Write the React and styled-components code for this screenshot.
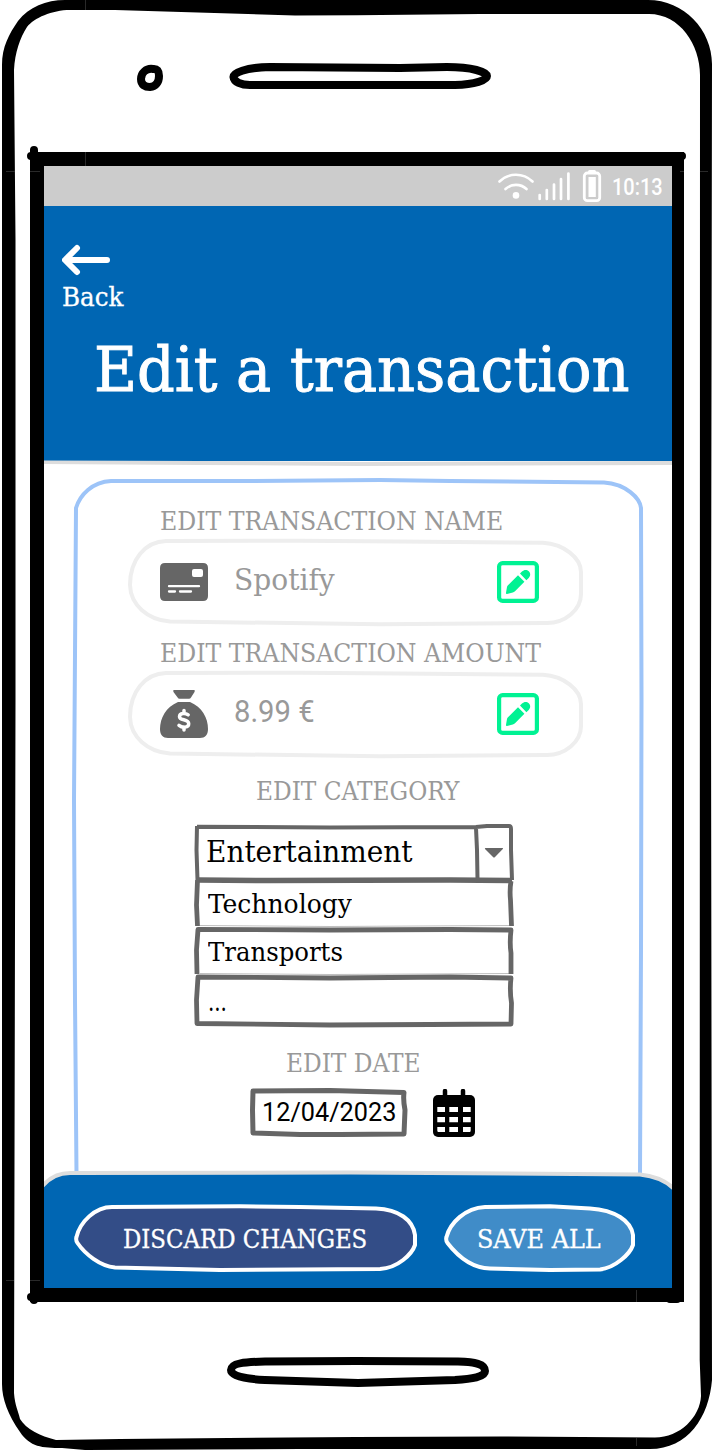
import React, { useLayoutEffect, useRef, useState } from "react";
import styled, { createGlobalStyle } from "styled-components";

const Global = createGlobalStyle`
  body { margin: 0; background: #fff; font-family: "Roboto Slab", "DejaVu Serif Condensed", "DejaVu Serif", serif; }
  button { font: inherit; border: 0; padding: 0; background: none; }
`;

const Device = styled.main`
  position: relative;
  box-sizing: border-box;
  width: 712px;
  height: 1450px;
  padding: 166px 40px 162px 44px;
  overflow: hidden;
  background: #fff;
`;
const Art = styled.svg`
  position: absolute;
  inset: 0;
  width: 100%;
  height: 100%;
  overflow: visible;
  pointer-events: none;
`;
const Screen = styled.div`
  display: flex;
  flex-direction: column;
  width: 628px;
  height: 1122px;
  overflow: hidden;
`;
const StatusBar = styled.div`
  display: flex;
  justify-content: flex-end;
  height: 40px;
  padding-right: 9px;
  background: #ccc;
`;
const Header = styled.header`
  position: relative;
  box-sizing: border-box;
  height: 255px;
  padding: 36px 0 0 18px;
  background: #0066b3;
`;
const BackLink = styled.button`
  display: block;
  text-align: left;
`;
const TitleRow = styled.h1`
  margin: 13px 0 0 32px;
  font-weight: 400;
`;
const Body = styled.section`
  position: relative;
  display: flex;
  flex-direction: column;
  box-sizing: border-box;
  height: 711px;
  padding-top: 42px;
`;
const LabelRow = styled.div`
  height: ${(p) => p.$height || 36}px;
  padding-left: ${(p) => p.$left}px;
`;
const Field = styled.div`
  position: relative;
  display: flex;
  align-items: center;
  box-sizing: border-box;
  width: 455px;
  height: 87px;
  margin: 0 0 9px 84px;
  padding: 0 44px 2px 32px;
`;
const FieldValue = styled.div`
  flex: 1;
  padding: 0 0 4px 26px;
`;
const Select = styled.div`
  position: relative;
  width: 319px;
  margin: 9px 0 0 150px;
`;
const Option = styled.div`
  display: flex;
  align-items: center;
  box-sizing: border-box;
  height: ${(p) => p.$height}px;
  padding-left: ${(p) => p.$left}px;
`;
const DateRow = styled.div`
  display: flex;
  align-items: flex-end;
  padding-left: 206px;
`;
const DateInput = styled.div`
  position: relative;
  box-sizing: border-box;
  width: 157px;
  height: 49px;
  margin-right: 26px;
  padding: 6px 0 0 12px;
`;
const Footer = styled.footer`
  position: relative;
  display: flex;
  gap: 27px;
  box-sizing: border-box;
  height: 116px;
  padding: 32px 0 0 30px;
`;
const PillButton = styled.button`
  position: relative;
  display: flex;
  align-items: center;
  box-sizing: border-box;
  width: ${(p) => p.$width}px;
  height: 68px;
  padding: 2px 0 0 ${(p) => p.$left}px;
  text-align: left;
`;
const TextBox = styled.span`
  position: relative;
  display: block;
  width: ${(p) => p.$width}px;
  height: ${(p) => p.$line}px;
  line-height: ${(p) => p.$line}px;
  font-size: ${(p) => p.$size}px;
  font-weight: ${(p) => p.$weight};
  color: ${(p) => p.$color};
  ${(p) => p.$sans && `font-family: "Roboto Slab", Roboto, sans-serif;`}
  -webkit-text-stroke: ${(p) => p.$heavy}px ${(p) => p.$color};
`;
const TextRun = styled.span`
  display: inline-block;
  white-space: nowrap;
  transform-origin: 0 50%;
`;
const Icon = styled.svg`
  position: relative;
  display: block;
  flex: none;
`;

/* Condenses or widens one line of text so that it fills its box. */
function Text({ w, size = 25.5, line = 36, color = "#999", weight = 400, heavy = 0, sans = false, children }) {
  const ref = useRef(null);
  const [scale, setScale] = useState(1);
  useLayoutEffect(() => {
    setScale(w / ref.current.offsetWidth);
  }, [w, children]);
  return (
    <TextBox $width={w} $size={size} $line={line} $color={color} $weight={weight} $heavy={heavy} $sans={sans}>
      <TextRun ref={ref} style={{ transform: `scaleX(${scale})` }}>{children}</TextRun>
    </TextBox>
  );
}

function DeviceFrame() {
  return (
    <Art viewBox="0 0 712 1450" aria-hidden="true">
      <path
        fillRule="evenodd"
        d="M2 65C2 47 9 34 18 21C29 7 46 0 65 0H648C684 0 712 30 712 64L711 700L712 1380C709 1417 688 1449 650 1449L300 1449L85 1450L62 1448C42 1448 30 1447 20 1432C8 1415 2 1399 2 1384Z
        M14 70C15 52 20 38 27 27C34 18 52 10 70 10H115L295 15.5L356 15.3L480 14H649C680 14 700 45 700 75L699.700 1360L701 1396C700 1417 680 1437.500 655 1437.500L500 1436.500L356 1437L120 1439L56 1440C40 1436 26 1429 20 1419C18 1410 15 1406 14 1393L15.500 700L15.500 240Z"
      />
      <path fillRule="evenodd" d="M30 152H684V1302H30ZM44 166V1288H672V166Z" />
      <path d="M34 150V160M31 156H40M34 1300V1292M31 1297H40M682 156H676M677 1299H670" stroke="#000" strokeWidth="8" strokeLinecap="round" />
      <g fill="none" stroke="#000" strokeWidth="8">
        <path d="M153 69C146 68 141 73 141 79C141 85 145 87 150 87C156 86.500 159 82 159 76C159 71 157 68.500 153 69Z" />
        <path d="M270 67C245 67.5 233 73 233.5 77C234 82 241 85 250 85H455C475 84.5 487 80 487 76C487 72 472 67 447 67L400 68Z" />
        <path d="M265 1361.5L356 1361L458 1361.5C475 1362 485 1364 485 1371C485 1377 472 1379 455 1380L358 1383L265 1380C245 1379 231 1376 231 1370C231 1363 245 1362 265 1361.5Z" />
      </g>
      <path d="M85.5 0V10M85.5 152V166M6 171.5H15M30 171.5H40M680 171.5H684M700 171.5H708M6 1280.5H14M30 1280.5H40M636.5 1290V1302M636.5 1438V1446" stroke="#444" strokeWidth=".6" />
    </Art>
  );
}

function StatusIcons() {
  return (
    <Icon width="115" height="40" viewBox="497 166 115 40" fill="none" stroke="#fff" strokeLinecap="round">
      <path d="M499.5 181.5C509 172.5 523 172.5 532.5 181.5M505.5 189C511.5 183.5 520.5 183.5 526.5 189" strokeWidth="2.6" />
      <circle cx="516" cy="195.4" r="3.3" fill="#fff" stroke="none" />
      <path d="M539.7 195V199M546.8 190V199M554 184.5V199M561 179V199M568.4 173.5V199" strokeWidth="2.7" />
      <rect x="584.3" y="173" width="15.4" height="27.7" rx="3" strokeWidth="2.8" />
      <path d="M589.5 171.5H594.5" strokeWidth="3" />
      <rect x="588.5" y="177" width="7.3" height="20" fill="#fff" stroke="none" />
    </Icon>
  );
}

function PillOutline() {
  return (
    <Art viewBox="128 539 455 87" fill="none" stroke="#eee" strokeWidth="4">
      <path d="M166 541L300 540.7L400 541.5L543 542.8C564 544 581 558 581 572V594C581 610 565 623 547 623L380 624.3L170 621.5C148 620 130.5 605 130 585C130 560 145 541.5 166 541Z" />
    </Art>
  );
}

function CardIcon() {
  return (
    <Icon width="48" height="48" viewBox="160 558 48 48">
      <path fill="#666" fillRule="evenodd" d="M165 563H203Q208 563 208 568V596Q208 601 203 601H165Q160 601 160 596V568Q160 563 165 563ZM194 569Q192 569 192 571V575Q192 577 194 577H201Q203 577 203 575V571Q203 569 201 569Z" />
      <path d="M169 586.2H199M169 591.5H175M180 591.5H191" stroke="#fff" strokeWidth="2.3" strokeLinecap="round" />
    </Icon>
  );
}

function MoneyBagIcon() {
  return (
    <Icon width="48" height="48" viewBox="160 690 48 48">
      <path fill="#666" d="M174 690H194Q195.500 690 194.500 692L191 697.500Q190.300 698.700 189 698.700H179.500Q178.300 698.700 177.600 697.500L173.500 692Q172.500 690 174 690ZM178 702H190C202 707 208 718 208 729C208 735 205 738 200 738H168C163 738 160 735 160 729C160 718 166 707 178 702Z" />
      <path d="M188.200 714.800C185.500 712.800 179.500 712.800 179.500 716.700C179.500 721 188.700 718.500 188.700 723.700C188.700 727.800 182.500 728.200 179 725.400M184 710.500V713.500M184 727V730" fill="none" stroke="#fff" strokeWidth="3.500" strokeLinecap="round" />
    </Icon>
  );
}

function EditIcon() {
  return (
    <Icon width="42" height="42" viewBox="497 561 42 42">
      <rect x="499.100" y="563.100" width="37.800" height="37.800" rx="3.500" fill="none" stroke="#00f293" strokeWidth="4.200" />
      <path fill="#00f293" d="M518 575.300L524.400 581.700L515 591.200Q514 592.300 512.800 592.500L507 593.900Q505.700 594 506 592.700L507 586.900Q507.200 586 508 585.200ZM520 573.600L522 571.500C524 569.500 527 569.400 528.800 571.300C530.700 573.200 530.600 576 528.700 577.900L526.400 580.200Z" />
    </Icon>
  );
}

function SelectArt() {
  return (
    <Art viewBox="194 824 319 204" fill="none" stroke="#666" strokeLinejoin="round">
      <path d="M197 826.800L330 827.500L476 827L487 826H509Q511 826 511 829V850L512 880M197 826L196.500 850L197.500 880M476 828L477 850L477.500 879" strokeWidth="4" />
      <path d="M197 880L270 880.500L450 880L512 880.500" strokeWidth="5.500" />
      <g strokeWidth="4.800">
        <path d="M197.500 880L196.500 905L197.500 926M511 881Q509.500 890 510.500 900L511.500 926" />
        <path d="M197 974L196.500 950L198 929.500L330 930L450 929.500L511 930Q509.500 943 511 953L511 974" />
        <path d="M198 977L330 978L450 977L511 978Q509.500 990 511.500 1003L511 1024L430 1024.500L330 1025L197 1023.500L196.500 1000Z" />
      </g>
      <path d="M200 925.500L330 926.500L509 925.500M200 973.500L330 974.500L509 973.500" strokeWidth=".7" opacity=".6" />
      <path d="M485.500 848H502.500Q503.500 848 502.800 849L495 857Q494 858 493 857L485 849Q484.500 848 485.500 848Z" fill="#666" stroke="none" />
    </Art>
  );
}

function CalendarIcon() {
  return (
    <Icon width="42" height="48" viewBox="433 1089 42 48">
      <rect x="433" y="1095" width="42" height="42" rx="5" />
      <path d="M445 1091V1097M463 1091V1097" stroke="#000" strokeWidth="4.500" strokeLinecap="round" />
      <path fill="#fff" d="M437.300 1107H445V1112H437.300ZM449.300 1107H458V1112H449.300ZM463 1107H470.700V1112H463ZM437.300 1117H445V1122.300H437.300ZM449.300 1117H458V1122.300H449.300ZM463 1117H470.700V1122.300H463ZM437.300 1127H445V1132H438.500Q437.300 1132 437.300 1130.500ZM449.300 1127H458V1132H449.300ZM463 1127H470.700V1130.500Q470.700 1132 469.500 1132H463Z" />
    </Icon>
  );
}

export default function App() {
  return (
    <Device>
      <Global />
      <Screen>
        <StatusBar>
          <StatusIcons />
          <Text w={51} size={24.3} line={42} color="#fff" weight={500} sans>10:13</Text>
        </StatusBar>
        <Header>
          <BackLink>
            <Icon width="50" height="36" viewBox="62 242 50 36" fill="none" stroke="#fff" strokeWidth="6" strokeLinecap="round" strokeLinejoin="round">
              <path d="M77 248L65 260L77 272M66 260H107" />
            </Icon>
            <Text w={61} line={39} color="#fff" heavy={0.3}>Back</Text>
          </BackLink>
          <TitleRow>
            <Text w={536} size={62.4} line={80} color="#fff" heavy={0.9}>Edit a transaction</Text>
          </TitleRow>
        </Header>
        <Body>
          <Art viewBox="44 461 628 711" fill="none">
            <path d="M44 460.500L200 461L360 462L672 461V465L500 465.500L360 466L200 465L44 464Z" fill="#ddd" />
            <path d="M76.500 1174L75 1000L74 800L76 508C80 495 92 482 111 481L250 481L380 480L450 481L604 482.500C626 484 640 498 641 508L641.500 700L641 950L640 1174" stroke="#9dc4f8" strokeWidth="4" />
          </Art>
          <LabelRow $left={116}><Text w={343}>EDIT TRANSACTION NAME</Text></LabelRow>
          <Field>
            <PillOutline />
            <CardIcon />
            <FieldValue><Text w={101} size={30}>Spotify</Text></FieldValue>
            <EditIcon />
          </Field>
          <LabelRow $left={116}><Text w={381}>EDIT TRANSACTION AMOUNT</Text></LabelRow>
          <Field>
            <PillOutline />
            <MoneyBagIcon />
            <FieldValue><Text w={81} size={31} sans>8.99 €</Text></FieldValue>
            <EditIcon />
          </Field>
          <LabelRow $left={212} $height={48}><Text w={203} line={48}>EDIT CATEGORY</Text></LabelRow>
          <Select>
            <SelectArt />
            <Option $height={56} $left={12}><Text w={207} size={30} color="#000">Entertainment</Text></Option>
            <Option $height={48} $left={14}><Text w={144} color="#000">Technology</Text></Option>
            <Option $height={48} $left={14}><Text w={135} color="#000">Transports</Text></Option>
            <Option $height={52} $left={14}><Text w={19} line={32} color="#000">...</Text></Option>
          </Select>
          <LabelRow $left={242} $height={60}><Text w={134} line={70}>EDIT DATE</Text></LabelRow>
          <DateRow>
            <DateInput>
              <Art viewBox="250 1088 157 49" fill="none" stroke="#666" strokeWidth="5" strokeLinejoin="round">
                <path d="M253 1091L330 1090.500L404 1092.500Q403 1100 405 1110L404 1134L340 1134.500L300 1134.500L253 1133L252.500 1110Z" />
              </Art>
              <Text w={134} size={26} color="#000" sans>12/04/2023</Text>
            </DateInput>
            <CalendarIcon />
          </DateRow>
        </Body>
        <Footer>
          <Art viewBox="44 1172 628 116">
            <path d="M44 1185C50 1177 60 1173 70 1173L350 1172.500L640 1174.500C654 1176 666 1180 673 1188V1288H44Z" fill="#0066b3" />
            <path d="M42 1186.500C50 1177 60 1173 70 1173L350 1172.500L640 1174.500C654 1176 666 1180 675 1190" fill="none" stroke="#ddd" strokeWidth="4" />
          </Art>
          <PillButton $width={343} $left={49}>
            <Art viewBox="74 1204 343 68" fill="#334d87" stroke="#fff" strokeWidth="4" strokeLinejoin="round">
              <path d="M112 1207C95 1207 80 1222 76.500 1237Q75.500 1240 77.500 1243C85 1254 100 1266 115 1267.500L220 1270L380 1269C398 1268 412 1254 415 1245V1235C413 1220 399 1209.500 376 1208.500L300 1207L240 1206.300Z" />
            </Art>
            <Text w={244} color="#fff" heavy={0.3}>DISCARD CHANGES</Text>
          </PillButton>
          <PillButton $width={191} $left={33}>
            <Art viewBox="444 1204 191 68" fill="#408cc8" stroke="#fff" strokeWidth="4" strokeLinejoin="round">
              <path d="M485 1207C465 1208 450 1223 446.500 1237Q445.500 1240 447.500 1243C456 1254 470 1268 490 1268.500L550 1270L600 1269.500C615 1268 630 1254 633 1245V1235C631 1221 615 1210 590 1208.500L550 1206.300Z" />
            </Art>
            <Text w={124} color="#fff" heavy={0.3}>SAVE ALL</Text>
          </PillButton>
        </Footer>
      </Screen>
      <DeviceFrame />
    </Device>
  );
}
